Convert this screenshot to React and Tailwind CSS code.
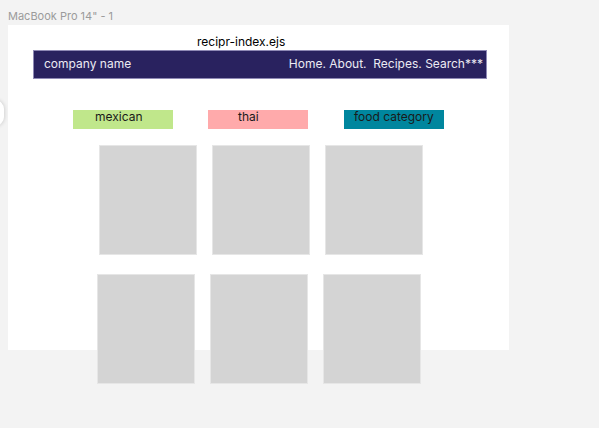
export default function App() {
  const font = { fontFamily: "Inter, 'Noto Sans', sans-serif" };
  return (
    <div className="relative w-[599px] h-[428px] overflow-hidden bg-[#f3f3f3]" style={font}>
      <div className="absolute left-[-14px] top-[100px] w-[18px] h-[26px] rounded-full bg-white shadow-[0_0_4px_rgba(0,0,0,0.2)]" />
      <div className="pl-[8px] pt-[9px] h-[25px] text-[11px] leading-[14px] text-[#9b9b9b]">MacBook Pro 14" - 1</div>
      <div className="ml-[8px] w-[501px] h-[325px] bg-white flex flex-col">
        <div className="shrink-0 h-[25px] pt-[9px] pl-[189px] text-[12px] leading-[15px] text-black">recipr-index.ejs</div>
        <div className="shrink-0 ml-[25px] w-[454px] h-[29px] bg-[#29225f] border border-[#8e89b5] flex items-center justify-between pl-[10px] pr-[3px] pb-px text-[12px] text-[#ecebf3]">
          <span>company name</span>
          <span className="whitespace-pre">Home. About.  Recipes. Search***</span>
        </div>
        <div className="shrink-0 mt-[31px] flex h-[19px] text-[12px] leading-[13px] text-[#1a1a1a]">
          <div className="ml-[65px] w-[100px] bg-[#c0e78b] pl-[22px]">mexican</div>
          <div className="ml-[35px] w-[100px] bg-[#ffaaab] pl-[30px]">thai</div>
          <div className="ml-[36px] w-[100px] bg-[#00869e] pl-[10px]">food category</div>
        </div>
        <div className="shrink-0 mt-[16px] flex gap-[15px] pl-[91px]">
          <div className="w-[98px] h-[110px] bg-[#d4d4d4] border border-[#e6e6e6]" />
          <div className="w-[98px] h-[110px] bg-[#d4d4d4] border border-[#e6e6e6]" />
          <div className="w-[98px] h-[110px] bg-[#d4d4d4] border border-[#e6e6e6]" />
        </div>
        <div className="shrink-0 mt-[19px] flex gap-[15px] pl-[89px]">
          <div className="w-[98px] h-[110px] bg-[#d4d4d4] border border-[#e6e6e6]" />
          <div className="w-[98px] h-[110px] bg-[#d4d4d4] border border-[#e6e6e6]" />
          <div className="w-[98px] h-[110px] bg-[#d4d4d4] border border-[#e6e6e6]" />
        </div>
      </div>
    </div>
  );
}
